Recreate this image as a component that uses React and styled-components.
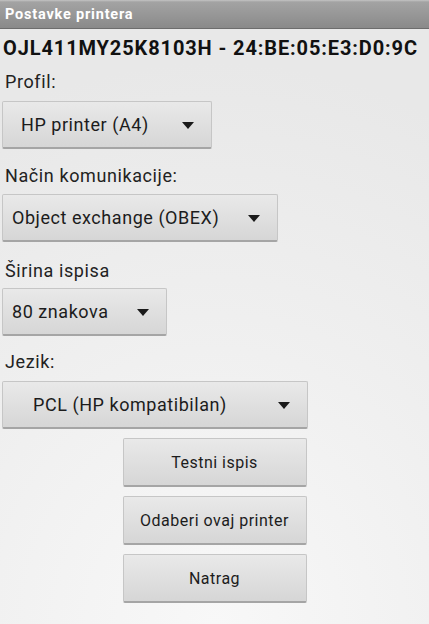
import React from "react";
import styled, { createGlobalStyle } from "styled-components";

const Global = createGlobalStyle`
  html, body { margin: 0; padding: 0; }
  body {
    font-family: Roboto, "Noto Sans", "Liberation Sans", sans-serif;
    background: #ececec;
  }
  #root { min-height: 624px; }
`;

const Screen = styled.div`
  width: 429px;
  height: 624px;
  overflow: hidden;
  display: flex;
  flex-direction: column;
  background: radial-gradient(ellipse 120% 90% at 50% 100%, #f8f8f8 0%, #efefef 55%, #e8e8e8 100%);
`;

const TitleBar = styled.div`
  height: 29px;
  flex: none;
  display: flex;
  align-items: center;
  padding-left: 5px;
  box-sizing: border-box;
  background: linear-gradient(#c4c4c4 0px, #a3a3a3 2px, #8a8a8a 100%);
  border-bottom: 1px solid #6d6d6d;
  color: #ffffff;
  font-size: 14.5px;
  font-weight: 700;
  letter-spacing: 0.8px;
`;

const Content = styled.div`
  display: flex;
  flex-direction: column;
  align-items: flex-start;
  padding: 7px 2px 0 2px;
`;

const Heading = styled.div`
  font-size: 20px;
  line-height: 24px;
  font-weight: 700;
  color: #111;
  padding-left: 1px;
  white-space: nowrap;
  letter-spacing: 0.88px;
`;

const Label = styled.div`
  font-size: 18px;
  line-height: 21px;
  color: #222;
  margin-top: ${(p) => p.$top}px;
  padding-left: 3px;
  letter-spacing: 0.6px;
`;

const Spinner = styled.div`
  width: ${(p) => p.$w}px;
  height: 48px;
  margin-top: ${(p) => p.$top}px;
  box-sizing: border-box;
  display: flex;
  align-items: center;
  padding-left: ${(p) => p.$pl}px;
  padding-right: 17px;
  background: linear-gradient(#e9e9e9, #d6d6d6);
  border: 1px solid #c6c6c6;
  border-bottom: 2px solid #a5a5a5;
  border-radius: 2px;
  font-size: 18px;
  color: #1c1c1c;
  letter-spacing: 0.55px;
`;

const SpinnerText = styled.span`
  flex: 1;
  white-space: nowrap;
`;

const Arrow = styled.span`
  width: 0;
  height: 0;
  border-left: 6.5px solid transparent;
  border-right: 6.5px solid transparent;
  border-top: 7px solid #1a1a1a;
  margin-top: 2px;
`;

const Buttons = styled.div`
  align-self: stretch;
  display: flex;
  flex-direction: column;
  align-items: center;
  gap: 9px;
  margin-top: 9px;
`;

const Button = styled.div`
  width: 184px;
  height: 49px;
  box-sizing: border-box;
  display: flex;
  align-items: center;
  justify-content: center;
  background: linear-gradient(#e9e9e9, #d6d6d6);
  border: 1px solid #c6c6c6;
  border-bottom: 2px solid #a5a5a5;
  border-radius: 2px;
  font-size: 16px;
  color: #1c1c1c;
  letter-spacing: 0.5px;
`;

const fields = [
  { label: "Profil:", value: "HP printer (A4)", w: 210, pl: 18, lt: 11, st: 9 },
  { label: "Način komunikacije:", value: "Object exchange (OBEX)", w: 276, pl: 9, lt: 16, st: 8 },
  { label: "Širina ispisa", value: "80 znakova", w: 165, pl: 9, lt: 18, st: 7 },
  { label: "Jezik:", value: "PCL (HP kompatibilan)", w: 306, pl: 30, lt: 15, st: 9 },
];

export default function App() {
  return (
    <>
      <Global />
      <Screen>
        <TitleBar>Postavke printera</TitleBar>
        <Content>
          <Heading>OJL411MY25K8103H - 24:BE:05:E3:D0:9C</Heading>
          {fields.map((f) => (
            <React.Fragment key={f.label}>
              <Label $top={f.lt}>{f.label}</Label>
              <Spinner $w={f.w} $pl={f.pl} $top={f.st}>
                <SpinnerText>{f.value}</SpinnerText>
                <Arrow />
              </Spinner>
            </React.Fragment>
          ))}
          <Buttons>
            <Button>Testni ispis</Button>
            <Button>Odaberi ovaj printer</Button>
            <Button>Natrag</Button>
          </Buttons>
        </Content>
      </Screen>
    </>
  );
}
